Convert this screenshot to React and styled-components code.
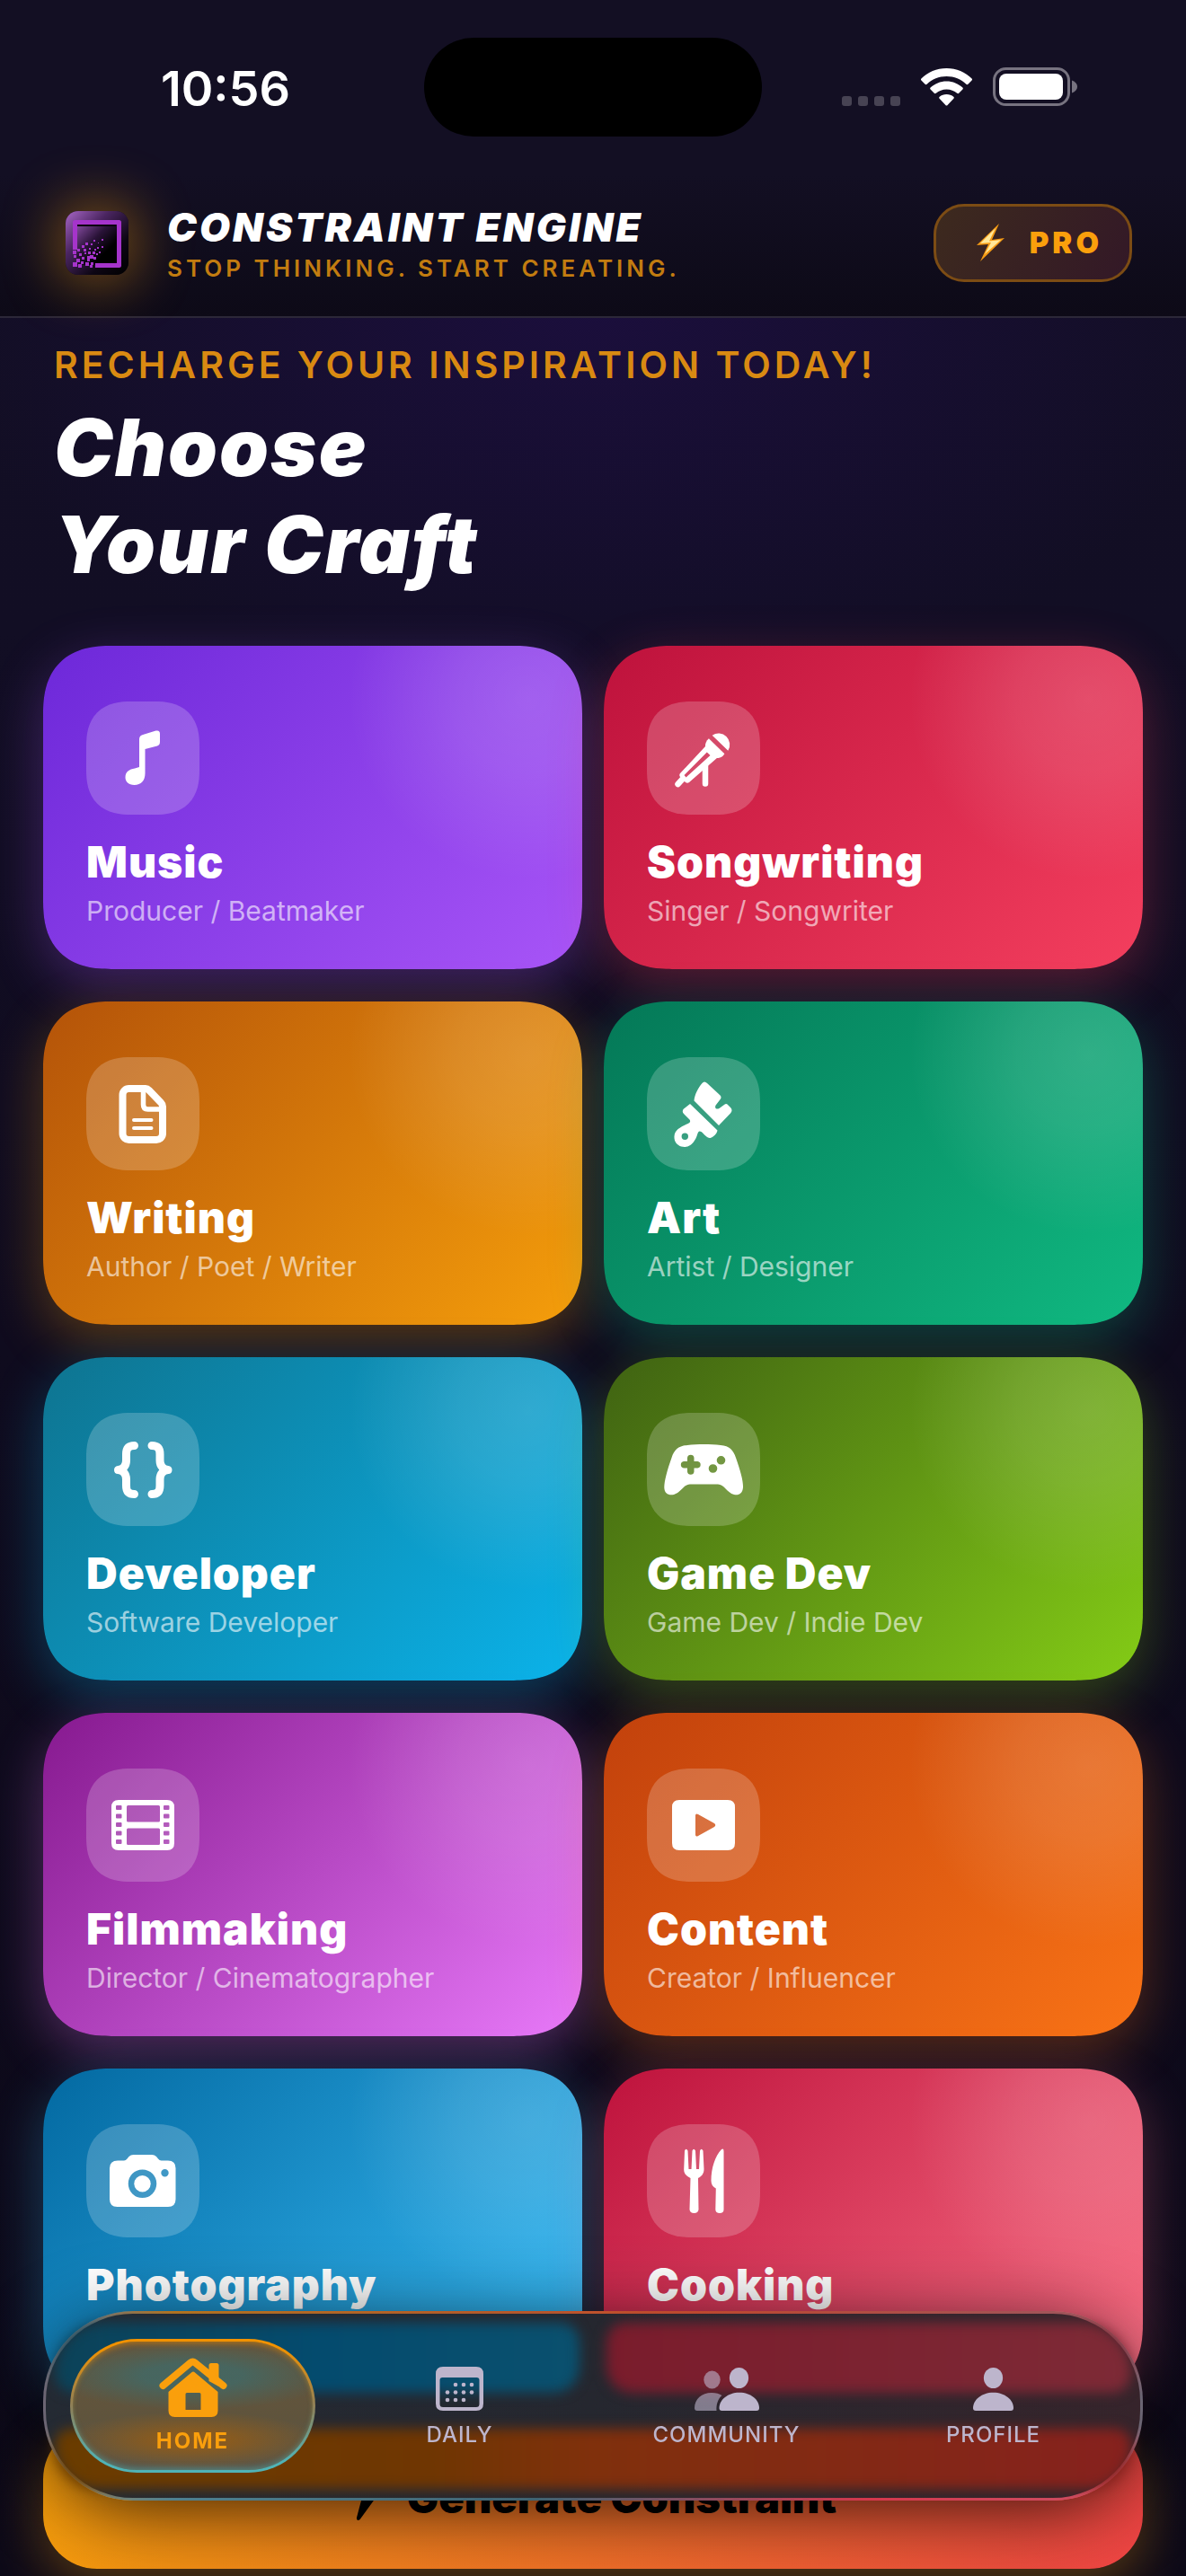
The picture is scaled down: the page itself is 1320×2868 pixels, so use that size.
import React from 'react';
import styled, { createGlobalStyle } from 'styled-components';

const GlobalStyle = createGlobalStyle`
    * {
        box-sizing: border-box;
    }
    body {
        margin: 0;
        background: #0c0918;
        font-family: Inter, "Liberation Sans", sans-serif;
        color: #fff;
    }
    button {
        font-family: inherit;
        color: inherit;
        border: 0;
        margin: 0;
        cursor: pointer;
    }
`;

const Page = styled.div`
    min-height: 100vh;
    overflow: hidden;
    background:
        radial-gradient(ellipse 56% 460px at 50% 320px, rgba(38, 14, 92, .45), transparent),
        linear-gradient(180deg, #130f24 0, #120e24 700px, #0f0b1e 1500px, #0c0918 100%);
`;

/* ---------- status bar ---------- */

const StatusBar = styled.div`
    display: grid;
    grid-template-columns: 1fr 376px 1fr;
    align-items: center;
    height: 194px;
    background: #130f23;
`;

const Time = styled.div`
    justify-self: center;
    padding: 4px 0 0 30px;
    font-size: 54px;
    line-height: 66px;
    font-weight: 600;
`;

const Island = styled.div`
    height: 110px;
    border-radius: 55px;
    background: #000;
`;

const StatusIcons = styled.div`
    display: flex;
    justify-content: flex-end;
    align-items: center;
    padding-right: 120px;
`;

/* ---------- header ---------- */

const Header = styled.header`
    display: flex;
    align-items: center;
    gap: 30px;
    padding: 28px 60px 34px;
    background: linear-gradient(180deg, #130f23, #0d0a17);
    border-bottom: 2px solid #2c2838;
`;

const LogoBox = styled.div`
    display: grid;
    place-items: center;
    width: 96px;
    height: 96px;
`;

const LogoGlow = styled.div`
    display: flex;
    border-radius: 14px;
    box-shadow: 0 0 60px 10px rgba(245, 158, 11, .42);
`;

const Brand = styled.div`
    flex: 1;
    padding-top: 3px;
`;

const BrandName = styled.div`
    font-size: 44px;
    line-height: 54px;
    font-weight: 900;
    font-style: italic;
    letter-spacing: 3px;
`;

const Tagline = styled.div`
    font-size: 26px;
    line-height: 38px;
    font-weight: 600;
    letter-spacing: 4px;
    color: #c27c10;
`;

const ProButton = styled.button`
    display: flex;
    align-items: center;
    gap: 26px;
    height: 87px;
    padding: 0 30px 0 44px;
    border: 3px solid #7c4c14;
    border-radius: 34px;
    background: linear-gradient(120deg, #3d2a1e, #331827);
    color: #fa9f0c;
    font-size: 33px;
    font-weight: 900;
    letter-spacing: 4px;
`;

/* ---------- hero ---------- */

const Hero = styled.section`
    padding: 28px 60px 59px;
`;

const Eyebrow = styled.p`
    margin: 0 0 14px;
    font-size: 41px;
    line-height: 48px;
    font-weight: 600;
    letter-spacing: 4px;
    color: #d98a12;
`;

const HeroTitle = styled.h1`
    margin: 0;
    font-size: 88px;
    line-height: 108px;
    font-weight: 900;
    font-style: oblique 10deg;
    letter-spacing: 2px;
`;

/* ---------- craft cards ---------- */

const Main = styled.main`
    padding: 0 48px 8px;
`;

const Grid = styled.div`
    display: grid;
    grid-template-columns: 1fr 1fr;
    gap: 36px 24px;
    margin-bottom: 37px;
`;

const Card = styled.button`
    display: flex;
    flex-direction: column;
    align-items: flex-start;
    height: 360px;
    padding: 62px 48px 0;
    border-radius: 62px;
    text-align: left;
    background:
        radial-gradient(circle 200px at calc(100% - 60px) 60px, rgba(255, 255, 255, .15), rgba(255, 255, 255, .11) 40%, transparent),
        linear-gradient(135deg, ${props => props.$from}, ${props => props.$to});
    box-shadow: 0 18px 60px ${props => props.$to}50;

    @supports (corner-shape: superellipse(1.3)) {
        border-radius: 76px;
        corner-shape: superellipse(1.3);
    }
`;

const IconTile = styled.span`
    display: block;
    width: 126px;
    height: 126px;
    border-radius: 40px;
    background: rgba(255, 255, 255, .2);

    @supports (corner-shape: superellipse(1.3)) {
        border-radius: 50px;
        corner-shape: superellipse(1.3);
    }

    svg {
        display: block;
    }
`;

const CardTitle = styled.span`
    margin-top: 23px;
    font-size: 48px;
    line-height: 60px;
    font-weight: 900;
    letter-spacing: 1px;
`;

const CardText = styled.span`
    margin-top: 6px;
    font-size: 30px;
    line-height: 36px;
    font-weight: 400;
    color: rgba(255, 255, 255, .6);
`;

const GenerateButton = styled.button`
    display: flex;
    justify-content: center;
    align-items: center;
    gap: 32px;
    width: 100%;
    height: 160px;
    border-radius: 60px;
    background: linear-gradient(105deg, #f59e0b, #ef4444);
    box-shadow: 0 18px 60px rgba(245, 158, 11, .34);
    color: #000;
    font-size: 47px;
    font-weight: 900;
`;

/* ---------- glass tab bar ---------- */

const TabBar = styled.nav`
    position: fixed;
    left: 48px;
    right: 48px;
    bottom: 84px;
    display: grid;
    grid-template-columns: repeat(4, 1fr);
    height: 211px;
    padding: 28px 15px;
    border: 3px solid transparent;
    border-radius: 100px;
    background:
        linear-gradient(90deg, #242a33, #25272f 50%, #36242b) padding-box,
        linear-gradient(180deg, transparent 12%, #6b6573 45%, #6b6573 60%, transparent 90%) border-box,
        linear-gradient(90deg, #777 4%, #b8741e 12%, #c04a30 60%, #9c5a66) top / 100% 50% no-repeat border-box,
        linear-gradient(90deg, #8d8468 3%, #4e8496 12%, #3d6476 45%, #d8384f 75%, #d0556a) bottom / 100% 50% no-repeat border-box;
    box-shadow: 0 14px 90px -10px rgba(0, 0, 0, .85);
`;

// soft colours of the cards that sit behind the glass
const Tints = styled.div`
    position: absolute;
    inset: 10px;
    z-index: 0;
    display: grid;
    grid-template-columns: 1fr 1fr;
    grid-template-rows: 78px 1fr;
    gap: 40px 30px;
    filter: blur(7px);
`;

const Tint = styled.div`
    grid-column: ${props => (props.$wide ? '1 / -1' : 'auto')};
    border-radius: ${props => props.$radius};
    background: ${props => props.$fill};
`;

const Tab = styled.a`
    position: relative;
    z-index: 1;
    display: flex;
    flex-direction: column;
    justify-content: center;
    align-items: center;
    gap: 13px;
    margin: 0 12px;
    padding-top: ${props => (props.$active ? '0' : '3px')};
    border: 3px solid transparent;
    border-radius: 75px;
    color: ${props => (props.$active ? '#fa9f0c' : '#bdb5cc')};
    font-size: 24px;
    line-height: 28px;
    font-weight: ${props => (props.$active ? 700 : 500)};
    letter-spacing: 1px;
    text-decoration: none;
    ${props => props.$active && `
        letter-spacing: 2px;
        background:
            radial-gradient(ellipse 60% 38px at 50% 38px, rgba(64, 106, 104, .8) 35%, transparent) padding-box,
            radial-gradient(ellipse 54% 32px at 50% 110px, rgba(146, 92, 24, .8) 30%, transparent) padding-box,
            linear-gradient(180deg, #66543a, #5f543d 60%, #5a564a) padding-box,
            linear-gradient(180deg, #f29200 6%, #8f8058 50%, #50b3b6 92%) border-box;
        box-shadow: inset 0 4px 6px -2px rgba(242, 146, 0, .5), inset 0 -4px 6px -2px rgba(80, 179, 182, .5);
    `}
`;

/* ---------- drawings ---------- */

const Logo = () => {
    const dust = [
        [8, 44, 4], [13, 42, 3], [9, 49, 3], [15, 47, 3], [12, 53, 4], [18, 51, 3], [8, 57, 5], [14, 59, 4],
        [17, 56, 3], [21, 46, 2], [20, 42, 3], [18, 38, 3], [22, 35, 3], [26, 41, 2], [25, 45, 3], [24, 50, 3],
        [22, 57, 4], [24, 53, 3], [28, 57, 3], [27, 49, 4], [28, 36, 2], [31, 32, 2], [30, 45, 3], [31, 51, 3],
        [35, 40, 2], [36, 35, 1], [34, 47, 2], [37, 45, 2], [40, 39, 2], [40, 31, 2], [27, 60, 3], [32, 42, 2],
    ];
    return (
        <svg width="70" height="71" viewBox="0 0 70 71" aria-hidden="true">
            <defs>
                <linearGradient id="logoOuter" x1="0" y1="0" x2="1" y2="1">
                    <stop offset="0" stopColor="#a866c6" />
                    <stop offset=".35" stopColor="#4a2560" />
                    <stop offset=".7" stopColor="#0d0614" />
                    <stop offset="1" stopColor="#000" />
                </linearGradient>
                <linearGradient id="logoInner" x1="0" y1="0" x2="1" y2="1">
                    <stop offset="0" stopColor="#8a4ea6" />
                    <stop offset=".4" stopColor="#2a1338" />
                    <stop offset=".7" stopColor="#000" />
                </linearGradient>
            </defs>
            <rect width="70" height="71" rx="14" fill="url(#logoOuter)" />
            <rect x="12" y="14" width="46" height="46" fill="url(#logoInner)" />
            <path d="M13 16H56" stroke="#07030a" strokeWidth="2" />
            <path d="M10.500 43V12.500H59.500V60.500H33" fill="none" stroke="#a534cb" strokeWidth="5" strokeLinejoin="round" />
            {dust.map(([x, y, s]) => (
                <rect key={`${x}-${y}`} x={x} y={y} width={s} height={s} fill="#a534cb" />
            ))}
        </svg>
    );
};

const Signal = () => (
    <svg width="66" height="43" viewBox="0 0 66 43" aria-hidden="true">
        {[0, 18, 36, 54].map(x => (
            <rect key={x} x={x} y="31" width="11" height="11" rx="3" fill="#474353" />
        ))}
    </svg>
);

const Wifi = () => (
    <svg width="102" height="43" viewBox="-22 0 102 43" fill="#fff" aria-hidden="true">
        <path d="M28.500 0C39.500 0 49.500 4.300 56.600 11.500C57.200 12.100 57.200 12.900 56.600 13.500L52.400 17.700C51.800 18.300 51 18.300 50.400 17.700C44.700 12.200 37 8.900 28.500 8.900S12.300 12.200 6.600 17.700C6 18.300 5.200 18.300 4.600 17.700L.4 13.500C-.2 12.900-.2 12.100 .4 11.500C7.500 4.300 17.500 0 28.500 0Z" />
        <path d="M28.500 14.500C35.400 14.500 41.700 17.200 46.400 21.600C47 22.200 47 23 46.400 23.600L42.200 27.800C41.600 28.400 40.900 28.400 40.200 27.800C37.100 25 33 23.400 28.500 23.400S19.900 25 16.800 27.800C16.100 28.400 15.400 28.400 14.800 27.800L10.600 23.600C10 23 10 22.200 10.600 21.600C15.300 17.200 21.600 14.500 28.500 14.500Z" />
        <path d="M28.500 29C31.500 29 34.200 30 36.300 31.800C37 32.400 37 33.200 36.400 33.800L29.600 41C29 41.700 28 41.700 27.400 41L20.600 33.800C20 33.200 20 32.400 20.700 31.800C22.800 30 25.500 29 28.500 29Z" />
    </svg>
);

const Battery = () => (
    <svg width="95" height="44" viewBox="0 0 95 44" aria-hidden="true">
        <rect x="1.500" y="1.500" width="83" height="40" rx="13" fill="none" stroke="#777380" strokeWidth="3" />
        <rect x="7" y="7" width="71" height="29" rx="8" fill="#fff" />
        <path d="M88 14.500C92 16 94 18.500 94 21.500S92 27 88 28.500Z" fill="#777380" />
    </svg>
);

const ProBolt = () => (
    <svg width="34" height="44" viewBox="0 0 34 44" aria-hidden="true">
        <path d="M26 1L1 25L14 24L5 43L32 17L18 19Z" fill="#f59b14" />
        <path d="M22 6L5 23L17 22L10 35L28 19L15 20.500Z" fill="#ffe89a" />
    </svg>
);

const Bolt = () => (
    <svg width="32" height="54" viewBox="0 0 32 54" fill="#000" aria-hidden="true">
        <path d="M23 1.500L1.500 28C.5 29.500 1 31 3 31H13L8 50C7.500 53 10 54 12 51.500L30.500 26C31.500 24.500 31 23 29 23H19L25.500 4C26.500 1 25 0 23 1.500Z" />
    </svg>
);

const Glyph = ({ children }) => (
    <svg width="126" height="126" viewBox="0 0 126 126" fill="#fff" aria-hidden="true">{children}</svg>
);

const MusicIcon = () => (
    <Glyph>
        <path d="M59 42Q59 38 63 37L77.500 32.600Q82 31.500 82 36V45Q82 48.500 79 49.500L65.500 53V80C65.500 88 61 93 53.500 93C47 93 43.500 89 43.500 84.500C43.500 78 48 75.500 54 74.500L59 73Z" />
    </Glyph>
);

const MicIcon = () => (
    <Glyph>
        <path d="M72.700 37.700A12.500 12.500 0 0 1 90.300 54.700Z" />
        <path d="M68.900 41.300L86.400 58.300C84 62 81 63.500 77.400 62.700L65 51.300C64.500 47 66 44 68.900 41.300Z" />
        <path fillRule="evenodd" d="M65 50L78.500 62.500L47 90Q45 91.500 43 90L37 84Q35.500 82 37 80ZM66.800 56.500L41.500 82L43.500 84.500L70.500 60Z" />
        <path d="M40 86L34.500 92M65 71V91.500" fill="none" stroke="#fff" strokeWidth="6.500" strokeLinecap="round" />
    </Glyph>
);

const DocIcon = () => (
    <Glyph>
        <g fill="none" stroke="#fff" strokeWidth="8" strokeLinecap="round" strokeLinejoin="round">
            <path d="M66 35H47.500A7 7 0 0 0 40.500 42V85A7 7 0 0 0 47.500 92H78A7 7 0 0 0 85 85V55Q85 52.500 83 50.500L70 37Q68 35 66 35Z" />
            <path d="M63.500 36V53Q63.500 58 68.500 58H84" strokeWidth="5.500" />
            <path d="M53 70H72.500M53 79H72.500" strokeWidth="4" />
        </g>
    </Glyph>
);

const BrushIcon = () => (
    <Glyph>
        <path d="M61.500 29C57 34 53 42 52.500 48.500L80 76L93 62.500Q96 59 93 56L89.500 52.500Q88 51.500 86 53L80.500 57C76.500 59 75 55.500 77 53L82 46.500C83 44.500 82.500 43.500 81 42L67 29C65 27 63 27 61.500 29Z" />
        <path fillRule="evenodd" d="M48 52L78.500 81.500C78 85 74 89 70.500 90C67 90.500 64 86 60.500 83C58 81.500 57 83 56 86.500C54 93 49 100 42 100C35 100 30 95 30.500 88C31 81 37 78 44.500 74.500C48.500 73 49 71 47 69L41 63Q38.500 60 41 57.500ZM42.300 84.500A3.700 3.700 0 1 0 42.300 91.900A3.700 3.700 0 1 0 42.300 84.500Z" />
    </Glyph>
);

const BracesIcon = () => (
    <Glyph>
        <g fill="none" stroke="#fff" strokeWidth="9" strokeLinecap="round" strokeLinejoin="round">
            <path d="M53.500 36.500C46.500 36.500 44.500 40 44.500 46V53C44.500 59 41 63 35.500 63.500C41 64 44.500 68 44.500 74V81C44.500 87 46.500 90.500 53.500 90.500" />
            <path d="M73 36.500C80 36.500 82 40 82 46V53C82 59 85.500 63 91 63.500C85.500 64 82 68 82 74V81C82 87 80 90.500 73 90.500" />
        </g>
    </Glyph>
);

const GamepadIcon = () => (
    <Glyph>
        <path
            fillRule="evenodd"
            d="M45 36C56 34.800 71 34.800 82 36C92 37 96 41 99 50C104 64 107.300 76 107 83C106.500 90 102 92 97 91C89 89 86 79.500 79 79.500H48C41 79.500 38 89 30 91C24 92 19.500 90 19.300 83C19.300 76 22.500 64 27.500 50C30.500 41 35 37 45 36ZM45 50V54H41A3.800 3.800 0 0 0 41 61.500H45V65.500A3.800 3.800 0 0 0 52.500 65.500V61.500H56.500A3.800 3.800 0 0 0 56.500 54H52.500V50A3.800 3.800 0 0 0 45 50ZM82.500 48A4.800 4.800 0 1 0 82.500 57.600A4.800 4.800 0 1 0 82.500 48ZM73.500 57.200A4.800 4.800 0 1 0 73.500 66.800A4.800 4.800 0 1 0 73.500 57.200Z"
        />
    </Glyph>
);

const sprockets = [33, 86].flatMap(x => [41, 50.5, 60, 69.5, 79].map(
    y => `M${x + 1} ${y}h4.500q1 0 1 1v3q0 1-1 1h-4.500q-1 0-1-1v-3q0-1 1-1z`
)).join('');

const FilmIcon = () => (
    <Glyph>
        <path
            fillRule="evenodd"
            d={`M36 35H90Q98 35 98 43V83Q98 91 90 91H36Q28 91 28 83V43Q28 35 36 35ZM46.500 41H80.500Q82 41 82 42.500V58Q82 59.500 80.500 59.500H46.500Q45 59.500 45 58V42.500Q45 41 46.500 41ZM46.500 66.500H80.500Q82 66.500 82 68V83.500Q82 85 80.500 85H46.500Q45 85 45 83.500V68Q45 66.500 46.500 66.500Z${sprockets}`}
        />
    </Glyph>
);

const PlayIcon = () => (
    <Glyph>
        <path fillRule="evenodd" d="M36 35H90Q98 35 98 43V83Q98 91 90 91H36Q28 91 28 83V43Q28 35 36 35ZM54 52.500V73.500Q54 76.500 57 75L75 65Q77.500 63 75 61L57 51Q54 49.500 54 52.500Z" />
    </Glyph>
);

const CameraIcon = () => (
    <Glyph>
        <path
            fillRule="evenodd"
            d="M35 40.500H42Q44 40.500 45.500 38.500L47.500 36Q49.500 34 52.500 34H73Q76 34 78 36L80 38.500Q81.500 40.500 83.500 40.500H91Q99.500 40.500 99.500 49V83.500Q99.500 92 91 92H34.500Q26 92 26 83.500V49Q26 40.500 35 40.500ZM62.500 50.500A15.700 15.700 0 1 0 62.500 82A15.700 15.700 0 1 0 62.500 50.500ZM87.500 50A4.200 4.200 0 1 0 87.500 58.400A4.200 4.200 0 1 0 87.500 50Z"
        />
        <circle cx="62.500" cy="66.300" r="9.200" />
    </Glyph>
);

const ForkIcon = () => (
    <Glyph>
        <path d="M42 29.500Q43.500 26 45.500 29.500L46.500 50H49.500L50.500 29.500Q52 26 54 29.500L55 50H58L59 29.500Q60.500 26 62.500 29.500L63.500 50C63.500 55 61 58 57 60L57.500 95Q57 99 52.500 99Q48 99 47.500 95L48.500 60C44 58 41 55 41.200 50Z" />
        <path d="M85.500 30V95Q85.500 99 81 99Q76.500 99 76.300 95L76.800 71.500C73.500 70 71.500 67 71.500 63C71.500 49 76 35 83 28Q85.500 26.500 85.500 30Z" />
    </Glyph>
);

const HomeIcon = () => (
    <svg width="76" height="66" viewBox="0 0 76 66" fill="currentColor" aria-hidden="true">
        <path d="M55.500 26V8.500Q55.500 6 58 6H64Q66.500 6 66.500 8.500V32Z" />
        <path d="M4.500 31L35 5.500Q37.500 3.500 40 5.500L71.500 31" fill="none" stroke="currentColor" strokeWidth="8" strokeLinecap="round" />
        <path fillRule="evenodd" d="M36 16.500Q38 14.500 40 16.500L65.500 38V59Q65.500 66 58.500 66H17.500Q10.500 66 10.500 59V38ZM31 39Q29.500 39 29.500 40.500V58H46.500V40.500Q46.500 39 45 39Z" />
    </svg>
);

const CalendarIcon = () => (
    <svg width="53" height="49" viewBox="0 0 53 49" fill="currentColor" aria-hidden="true">
        <path fillRule="evenodd" d="M8 0H45Q53 0 53 8V41Q53 49 45 49H8Q0 49 0 41V8Q0 0 8 0ZM7.500 12Q4.500 12 4.500 15V41.500Q4.500 45 8 45H45Q48.500 45 48.500 41.500V15Q48.500 12 45.500 12Z" />
        {[[22, 20], [31, 20], [40, 20], [13, 28.5], [22, 28.5], [31, 28.5], [40, 28.5], [13, 37], [22, 37], [31, 37]].map(([x, y]) => (
            <circle key={`${x}-${y}`} cx={x} cy={y} r="2.300" />
        ))}
    </svg>
);

const PeopleIcon = () => (
    <svg width="72" height="48" viewBox="0 0 72 48" fill="currentColor" aria-hidden="true">
        <g opacity=".6">
            <ellipse cx="19.500" cy="13.500" rx="9.200" ry="10" />
            <path d="M19 28C24 28 27.500 29 30.500 31C26 35 24 41 24.500 48H3Q0 48 0 45C0 35 8 28 19 28Z" />
        </g>
        <ellipse cx="49.500" cy="11.500" rx="10.600" ry="11.500" />
        <path d="M49.800 27.700C63 27.700 72 36 72 45Q72 48 69 48H30.500Q27.500 48 27.500 45C27.500 36 37 27.700 49.800 27.700Z" />
    </svg>
);

const PersonIcon = () => (
    <svg width="45" height="48" viewBox="0 0 45 48" fill="currentColor" aria-hidden="true">
        <ellipse cx="22.500" cy="11.500" rx="10.600" ry="11.500" />
        <path d="M22.500 27.700C35.500 27.700 45 36 45 45Q45 48 42 48H3Q0 48 0 45C0 36 9.500 27.700 22.500 27.700Z" />
    </svg>
);

const crafts = [
    { title: 'Music', text: 'Producer / Beatmaker', from: '#6d28d9', to: '#a855f7', Icon: MusicIcon },
    { title: 'Songwriting', text: 'Singer / Songwriter', from: '#be123c', to: '#f43f5e', Icon: MicIcon },
    { title: 'Writing', text: 'Author / Poet / Writer', from: '#b45309', to: '#f59e0b', Icon: DocIcon },
    { title: 'Art', text: 'Artist / Designer', from: '#047857', to: '#10b981', Icon: BrushIcon },
    { title: 'Developer', text: 'Software Developer', from: '#0e7490', to: '#0bb3ea', Icon: BracesIcon },
    { title: 'Game Dev', text: 'Game Dev / Indie Dev', from: '#3f6212', to: '#84cc16', Icon: GamepadIcon },
    { title: 'Filmmaking', text: 'Director / Cinematographer', from: '#86198f', to: '#e879f9', Icon: FilmIcon },
    { title: 'Content', text: 'Creator / Influencer', from: '#c2410c', to: '#f97316', Icon: PlayIcon },
    { title: 'Photography', from: '#0369a1', to: '#38bdf8', Icon: CameraIcon },
    { title: 'Cooking', from: '#be123c', to: '#fb7185', Icon: ForkIcon },
];

const tabs = [
    { label: 'HOME', Icon: HomeIcon, active: true },
    { label: 'DAILY', Icon: CalendarIcon },
    { label: 'COMMUNITY', Icon: PeopleIcon },
    { label: 'PROFILE', Icon: PersonIcon },
];

const App = () => (
    <Page>
        <GlobalStyle />
        <StatusBar>
            <Time>10:56</Time>
            <Island />
            <StatusIcons>
                <Signal />
                <Wifi />
                <Battery />
            </StatusIcons>
        </StatusBar>
        <Header>
            <LogoBox>
                <LogoGlow><Logo /></LogoGlow>
            </LogoBox>
            <Brand>
                <BrandName>CONSTRAINT ENGINE</BrandName>
                <Tagline>STOP THINKING. START CREATING.</Tagline>
            </Brand>
            <ProButton type="button">
                <ProBolt />
                PRO
            </ProButton>
        </Header>
        <Hero>
            <Eyebrow>RECHARGE YOUR INSPIRATION TODAY!</Eyebrow>
            <HeroTitle>Choose<br />Your Craft</HeroTitle>
        </Hero>
        <Main>
            <Grid>
                {crafts.map(({ title, text, from, to, Icon }) => (
                    <Card key={title} type="button" $from={from} $to={to}>
                        <IconTile><Icon /></IconTile>
                        <CardTitle>{title}</CardTitle>
                        {text && <CardText>{text}</CardText>}
                    </Card>
                ))}
            </Grid>
            <GenerateButton type="button">
                <Bolt />
                Generate Constraint
            </GenerateButton>
        </Main>
        <TabBar>
            <Tints>
                <Tint $radius="80px 30px 40px 30px" $fill="linear-gradient(90deg, #0c4258, #044b6e 50%, #0a506e)" />
                <Tint $radius="30px 80px 30px 40px" $fill="linear-gradient(90deg, #7a1c2c, #7d2a36)" />
                <Tint $wide $radius="30px 30px 80px 80px" $fill="linear-gradient(90deg, #6a3c00, #6f3602 35%, #80300c 50%, #86211e)" />
            </Tints>
            {tabs.map(({ label, Icon, active }) => (
                <Tab key={label} href={`#${label.toLowerCase()}`} $active={active} aria-current={active ? 'page' : undefined}>
                    <Icon />
                    {label}
                </Tab>
            ))}
        </TabBar>
    </Page>
);

export default App;
